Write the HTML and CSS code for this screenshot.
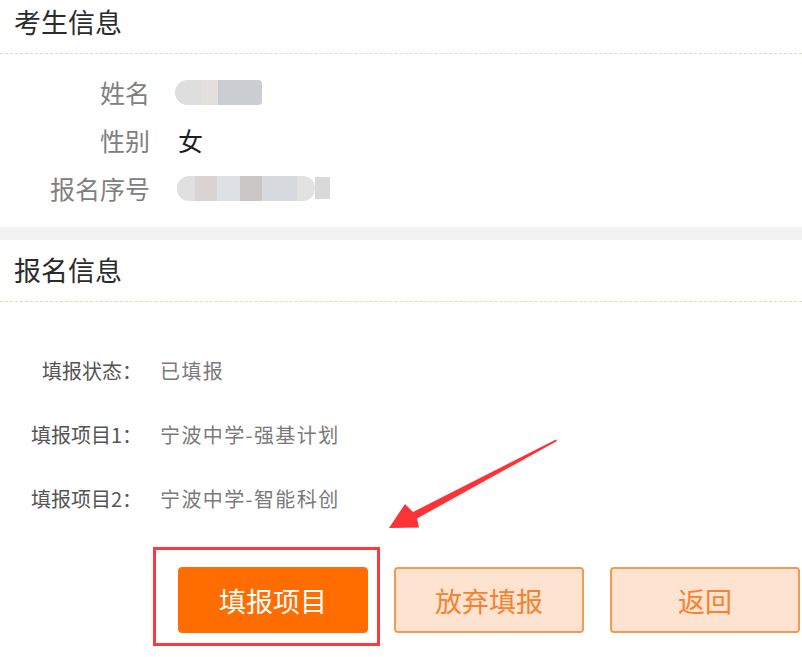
FILE: index.html
```html
<!DOCTYPE html>
<html lang="zh-CN">
<head>
<meta charset="utf-8">
<title>报名信息</title>
<link rel="stylesheet" href="styles.css">
</head>
<body>
<div class="page">
  <section class="section">
    <div class="section-title first">考生信息</div>
    <div class="info-rows">
      <div class="info-row"><span class="info-label">姓名</span><span class="info-value"><span class="blob blob-name"></span></span></div>
      <div class="info-row"><span class="info-label">性别</span><span class="info-value">女</span></div>
      <div class="info-row"><span class="info-label">报名序号</span><span class="info-value"><span class="blob blob-serial"></span><span class="blob blob-tail"></span></span></div>
    </div>
  </section>
  <div class="band"></div>
  <section class="section">
    <div class="section-title">报名信息</div>
    <div class="form-rows">
      <div class="form-row"><span class="form-label">填报状态：</span><span class="form-value">已填报</span></div>
      <div class="form-row"><span class="form-label">填报项目1：</span><span class="form-value">宁波中学-强基计划</span></div>
      <div class="form-row"><span class="form-label">填报项目2：</span><span class="form-value">宁波中学-智能科创</span></div>
    </div>
    <div class="actions">
      <button class="btn btn-primary">填报项目</button>
      <button class="btn btn-light">放弃填报</button>
      <button class="btn btn-light">返回</button>
    </div>
  </section>
  <div class="highlight-box"></div>
  <svg class="arrow" width="802" height="657" viewBox="0 0 802 657">
    <polygon points="556,439.5 413,512 405,504 389,528 419,527.5 417,518.5 557,441" fill="#fb3236"/>
  </svg>
</div>
</body>
</html>
```

FILE: styles.css
```css
html, body {
  margin: 0;
  padding: 0;
  background: #ffffff;
}

body {
  font-family: "Noto Sans CJK SC", "Noto Sans", sans-serif;
  color: #333333;
}

.page {
  position: relative;
  width: 802px;
  height: 657px;
  overflow: hidden;
}

.section-title {
  font-size: 27px;
  line-height: 36px;
  padding: 12px 14px 13px;
  color: #2b2b2b;
  border-bottom: 1px dashed #f2d3bc;
}

.section-title.first {
  padding-top: 4px;
}

.info-rows {
  padding: 14px 0 15px;
}

.info-row {
  display: flex;
  align-items: center;
  height: 48px;
  font-size: 25px;
}

.info-label {
  width: 150px;
  text-align: right;
  color: #808080;
}

.info-value {
  margin-left: 28px;
  color: #1e1e1e;
  display: flex;
  align-items: center;
}

.blob {
  display: inline-block;
  height: 25px;
}

.blob-name {
  width: 87px;
  margin-left: -3px;
  border-radius: 13px 4px 4px 13px;
  background: linear-gradient(to right, #dedede 0, #dedede 26px, #e3e0dd 26px, #e3e0dd 43px, #c9cdd1 43px, #cbced2 87px);
}

.blob-serial {
  width: 138px;
  margin-left: -1px;
  border-radius: 12px;
  background: linear-gradient(to right, #e0e0e0 0, #e0e0e0 18px, #d9d4d2 18px, #d9d4d2 40px, #dde1e5 40px, #dde1e5 63px, #cbc6c6 63px, #cbc6c6 85px, #d7dade 85px, #d7dade 120px, #e2e2e2 120px);
}

.blob-tail {
  width: 15px;
  height: 22px;
  background: #d9d9d9;
}

.band {
  height: 13px;
  background: #f2f2f2;
}

.form-rows {
  padding-top: 36px;
}

.form-row {
  display: flex;
  align-items: center;
  height: 64px;
  font-size: 20px;
}

.form-label {
  width: 142px;
  text-align: right;
  color: #555555;
}

.form-value {
  margin-left: 18px;
  color: #7a7a7a;
  letter-spacing: 1.4px;
}

.actions {
  display: flex;
  gap: 26px;
  padding: 37px 0 0 178px;
}

.btn {
  width: 190px;
  height: 66px;
  border-radius: 4px;
  font-family: "Noto Sans CJK SC", "Noto Sans", sans-serif;
  font-size: 27px;
  line-height: 1;
  cursor: pointer;
  padding: 0;
}

.btn-primary {
  background: #ff6d00;
  border: 1px solid #ff6d00;
  color: #ffffff;
}

.btn-light {
  background: #fde3d0;
  border: 2px solid #f59a55;
  color: #f5822f;
}

.highlight-box {
  position: absolute;
  left: 153px;
  top: 547px;
  width: 221px;
  height: 93px;
  border: 3px solid #fb3a40;
}

.arrow {
  position: absolute;
  left: 0;
  top: 0;
  pointer-events: none;
}
```
